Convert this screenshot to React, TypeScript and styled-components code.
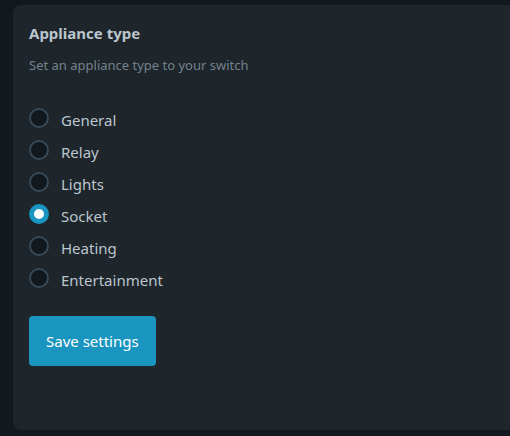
import React, { useState } from "react";
import styled, { createGlobalStyle } from "styled-components";

const GlobalStyle = createGlobalStyle`
  *, *::before, *::after {
    box-sizing: border-box;
  }

  body {
    margin: 0;
    background: #11191f;
    color: #bbc6ce;
    font-family: "Segoe UI", "Noto Sans", "Open Sans", sans-serif;
    font-size: 15px;
    line-height: 24px;
  }
`;

const Page = styled.main`
  padding: 5px 0 6px 13px;
`;

const Card = styled.form`
  padding: 16px 16px 64px;
  border-radius: 8px 0 0 8px;
  background: #1e252b;
`;

const Title = styled.h2`
  margin: 0;
  font-size: 15px;
  font-weight: 700;
  line-height: 24px;
`;

const Description = styled.p`
  margin: 8px 0 0;
  color: #73828c;
  font-size: 13px;
  line-height: 24px;
`;

const Options = styled.fieldset`
  display: flex;
  flex-direction: column;
  align-items: flex-start;
  gap: 8px;
  margin: 31px 0 24px;
  padding: 0;
  border: 0;
`;

const Option = styled.label`
  display: flex;
  align-items: flex-start;
  gap: 12px;
  cursor: pointer;
`;

const Radio = styled.input`
  appearance: none;
  flex: none;
  width: 20px;
  height: 20px;
  margin: 0;
  border: 2px solid #374956;
  border-radius: 50%;
  background: #11191f;
  cursor: pointer;

  &:checked {
    border: 5px solid #1a95bf;
    background: #fff;
  }

  &:focus-visible {
    outline: 2px solid #1a95bf;
    outline-offset: 2px;
  }
`;

const SaveButton = styled.button`
  padding: 13px 17px;
  border: 0;
  border-radius: 4px;
  background: #1a95bf;
  color: #fff;
  font: inherit;
  cursor: pointer;
`;

const applianceTypes = ["General", "Relay", "Lights", "Socket", "Heating", "Entertainment"];

export default function App() {
  const [selected, setSelected] = useState("Socket");

  return (
    <>
      <GlobalStyle />
      <Page>
        <Card onSubmit={(event: React.FormEvent) => event.preventDefault()}>
          <Title id="appliance-title">Appliance type</Title>
          <Description id="appliance-description">Set an appliance type to your switch</Description>
          <Options aria-labelledby="appliance-title" aria-describedby="appliance-description">
            {applianceTypes.map((type) => (
              <Option key={type}>
                <Radio
                  type="radio"
                  name="appliance"
                  value={type}
                  checked={selected === type}
                  onChange={() => setSelected(type)}
                />
                {type}
              </Option>
            ))}
          </Options>
          <SaveButton type="submit">Save settings</SaveButton>
        </Card>
      </Page>
    </>
  );
}
